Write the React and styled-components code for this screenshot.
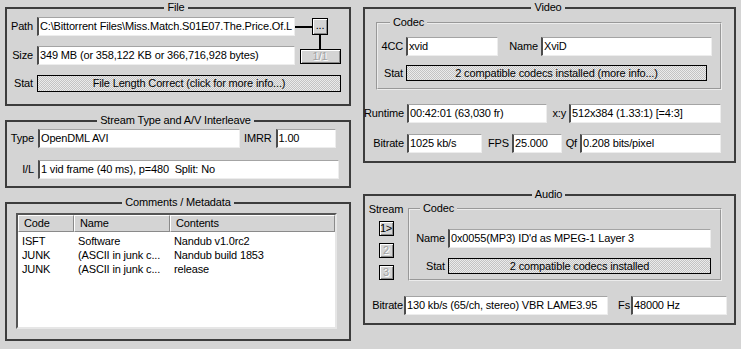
import React from "react";
import styled, { createGlobalStyle } from "styled-components";

const GlobalStyle = createGlobalStyle`
    html, body {
        margin: 0;
        padding: 0;
        background: #d4d4d4;
    }
    body {
        font-family: "Liberation Sans", Arial, sans-serif;
        font-size: 11px;
        letter-spacing: -0.15px;
        color: #000;
    }
    * {
        box-sizing: border-box;
    }
`;

const Window = styled.div`
    width: 741px;
    height: 349px;
    display: flex;
    gap: 12px;
    padding: 1px 5px 0 5px;
    background: #d4d4d4;
    overflow: hidden;
`;

const Column = styled.div`
    width: ${p => p.$w}px;
    flex-shrink: 0;
    display: flex;
    flex-direction: column;
    gap: ${p => p.$gap}px;
`;

const Group = styled.fieldset`
    margin: 0;
    padding: ${p => p.$pad};
    border: 2px solid #3c3c3c;
    min-inline-size: 0;
`;

const SubGroup = styled.fieldset`
    margin: 0 0 0 ${p => p.$ml || 0}px;
    width: ${p => p.$w}px;
    padding: ${p => p.$pad};
    border: 2px groove #ececec;
    min-inline-size: 0;
    flex-shrink: 0;
`;

const Legend = styled.legend`
    margin: ${p => (p.$left !== undefined ? `0 0 0 ${p.$left}px` : "0 auto")};
    padding: 0 3px;
    font-size: 11px;
    line-height: 13px;
`;

const Row = styled.div`
    display: flex;
    align-items: center;
    gap: ${p => p.$gap ?? 3}px;
    margin-top: ${p => p.$mt || 0}px;
`;

const Label = styled.span`
    display: inline-flex;
    justify-content: flex-end;
    width: ${p => (p.$w ? `${p.$w}px` : "auto")};
    margin-left: ${p => p.$ml || 0}px;
    flex-shrink: 0;
    white-space: nowrap;
    line-height: 13px;
`;

const Field = styled.div`
    width: ${p => p.$w}px;
    height: 19px;
    flex-shrink: 0;
    background: #fff;
    border-style: solid;
    border-width: 1px 1px 1px 2px;
    border-color: #a4a4a4 #ededed #ededed #4c4c4c;
    padding-left: 1px;
    line-height: 17px;
    white-space: nowrap;
    overflow: hidden;
`;

const StatButton = styled.div`
    width: ${p => p.$w}px;
    height: ${p => p.$h || 16}px;
    flex-shrink: 0;
    border: 1px solid #000;
    background-color: #ebebeb;
    background-image: conic-gradient(#c3c3c3 25%, transparent 0 50%, #c3c3c3 0 75%, transparent 0);
    background-size: 2px 2px;
    text-align: center;
    line-height: ${p => (p.$h || 16) - 2}px;
    white-space: nowrap;
    overflow: hidden;
    cursor: pointer;
`;

const SmallButton = styled.div`
    width: ${p => p.$w}px;
    height: ${p => p.$h}px;
    margin-top: ${p => p.$mt || 0}px;
    flex-shrink: 0;
    border: 1px solid #000;
    background: #d4d4d4;
    box-shadow: inset 1px 1px #fff, inset -1px -1px #8a8a8a;
    display: flex;
    align-items: center;
    justify-content: center;
    font-size: 11px;
    line-height: 11px;
    color: ${p => (p.$off ? "#a2a2a2" : "#000")};
    text-shadow: ${p => (p.$off ? "1px 1px #fff" : "none")};
`;

const BrowseButton = styled(SmallButton)`
    position: relative;
    align-items: flex-end;
    padding-bottom: 3px;

    &::before {
        content: "";
        position: absolute;
        right: 100%;
        top: 7px;
        width: 18px;
        height: 2px;
        background: #000;
    }
`;

const FileGrid = styled.div`
    display: grid;
    grid-template-columns: 23px 258px 42px;
    grid-template-rows: 19px 19px 17px;
    column-gap: 4px;
    row-gap: 10px;
    align-items: center;
`;

const Cluster = styled.div`
    grid-column: 3;
    grid-row: 1 / span 2;
    align-self: start;
    display: flex;
    flex-direction: column;
    align-items: center;
`;

const Link = styled.div`
    width: 2px;
    height: 14px;
    background: #000;
`;

const WideStat = styled(StatButton)`
    grid-column: 2 / span 2;
    width: auto;
`;

const ListBox = styled.div`
    width: 321px;
    height: 116px;
    background: #fff;
    border-style: solid;
    border-width: 2px;
    border-color: #555 #e6e6e6 #e6e6e6 #555;
`;

const ListRow = styled.div`
    display: grid;
    grid-template-columns: 56px 96px 1fr;
`;

const HeadCell = styled.div`
    height: 17px;
    padding-left: 5px;
    line-height: 15px;
    background: #d4d4d4;
    border-style: solid;
    border-width: 1px;
    border-color: #fff #8a8a8a #8a8a8a #fff;
`;

const ListBody = styled.div`
    padding-top: 2px;
`;

const Cell = styled.div`
    height: 14px;
    padding-left: 4px;
    line-height: 14px;
    white-space: nowrap;
    overflow: hidden;
`;

const TopRow = styled.div`
    display: flex;
    align-items: flex-start;
    gap: 3px;
`;

const StreamCol = styled.div`
    width: 38px;
    flex-shrink: 0;
    display: flex;
    flex-direction: column;
    align-items: center;
    gap: 7px;
    padding-top: 1px;
`;

const StreamTitle = styled.div`
    line-height: 13px;
    margin-bottom: -2px;
`;

const metadata = [
    ["ISFT", "Software", "Nandub v1.0rc2"],
    ["JUNK", "(ASCII in junk c...", "Nandub build 1853"],
    ["JUNK", "(ASCII in junk c...", "release"],
];

function App() {
    return (
        <>
            <GlobalStyle />
            <Window>
                <Column $w={346} $gap={8}>
                    <Group $pad="3px 7px 12px 3px">
                        <Legend>File</Legend>
                        <FileGrid>
                            <Label $w={23}>Path</Label>
                            <Field $w={258}>{"C:\\Bittorrent Files\\Miss.Match.S01E07.The.Price.Of.L"}</Field>
                            <Cluster>
                                <BrowseButton $w={16} $h={17} $mt={1}>...</BrowseButton>
                                <Link />
                                <SmallButton $w={41} $h={15} $off>1/1</SmallButton>
                            </Cluster>
                            <Label $w={23}>Size</Label>
                            <Field $w={258}>349 MB (or 358,122 KB or 366,716,928 bytes)</Field>
                            <Label $w={23}>Stat</Label>
                            <WideStat $h={17}>File Length Correct (click for more info...)</WideStat>
                        </FileGrid>
                    </Group>

                    <Group $pad="2px 8px 7px 3px">
                        <Legend>Stream Type and A/V Interleave</Legend>
                        <Row $gap={4}>
                            <Label $w={24}>Type</Label>
                            <Field $w={202}>OpenDML AVI</Field>
                            <Label>IMRR</Label>
                            <Field $w={60}>1.00</Field>
                        </Row>
                        <Row $gap={4} $mt={12}>
                            <Label $w={24}>I/L</Label>
                            <Field $w={301}>1 vid frame (40 ms), p=480&nbsp; Split: No</Field>
                        </Row>
                    </Group>

                    <Group $pad="4px 9px 10px 9px">
                        <Legend>Comments / Metadata</Legend>
                        <ListBox>
                            <ListRow>
                                <HeadCell>Code</HeadCell>
                                <HeadCell>Name</HeadCell>
                                <HeadCell>Contents</HeadCell>
                            </ListRow>
                            <ListBody>
                                {metadata.map((m, i) => (
                                    <ListRow key={i}>
                                        <Cell>{m[0]}</Cell>
                                        <Cell>{m[1]}</Cell>
                                        <Cell>{m[2]}</Cell>
                                    </ListRow>
                                ))}
                            </ListBody>
                        </ListBox>
                    </Group>
                </Column>

                <Column $w={373} $gap={25}>
                    <Group $pad="2px 4px 8px 1px">
                        <Legend>Video</Legend>
                        <SubGroup $ml={10} $w={346} $pad="8px 4px 7px 2px">
                            <Legend $left={10}>Codec</Legend>
                            <Row>
                                <Label $w={23}>4CC</Label>
                                <Field $w={92}>xvid</Field>
                                <Label $w={29} $ml={8}>Name</Label>
                                <Field $w={171}>XviD</Field>
                            </Row>
                            <Row $mt={9}>
                                <Label $w={23}>Stat</Label>
                                <StatButton $w={301}>2 compatible codecs installed (more info...)</StatButton>
                            </Row>
                        </SubGroup>
                        <Row $mt={14}>
                            <Label $w={38}>Runtime</Label>
                            <Field $w={140}>00:42:01 (63,030 fr)</Field>
                            <Label $w={16}>x:y</Label>
                            <Field $w={152}>512x384 (1.33:1) [=4:3]</Field>
                        </Row>
                        <Row $mt={11}>
                            <Label $w={38}>Bitrate</Label>
                            <Field $w={75}>1025 kb/s</Field>
                            <Label $w={24}>FPS</Label>
                            <Field $w={50}>25.000</Field>
                            <Label $w={12}>Qf</Label>
                            <Field $w={141}>0.208 bits/pixel</Field>
                        </Row>
                    </Group>

                    <Group $pad="1px 4px 8px 2px">
                        <Legend>Audio</Legend>
                        <TopRow>
                            <StreamCol>
                                <StreamTitle>Stream</StreamTitle>
                                <SmallButton $w={15} $h={15}>1&gt;</SmallButton>
                                <SmallButton $w={15} $h={15} $off>2</SmallButton>
                                <SmallButton $w={15} $h={15} $off>3</SmallButton>
                            </StreamCol>
                            <SubGroup $w={314} $pad="14px 4px 5px 6px">
                                <Legend $left={4}>Codec</Legend>
                                <Row>
                                    <Label $w={29}>Name</Label>
                                    <Field $w={263}>0x0055(MP3) ID'd as MPEG-1 Layer 3</Field>
                                </Row>
                                <Row $mt={10}>
                                    <Label $w={29}>Stat</Label>
                                    <StatButton $w={263}>2 compatible codecs installed</StatButton>
                                </Row>
                            </SubGroup>
                        </TopRow>
                        <Row $mt={15} $gap={1}>
                            <Label $w={36}>Bitrate</Label>
                            <Field $w={204}>130 kb/s (65/ch, stereo) VBR LAME3.95</Field>
                            <Label $w={11} $ml={10}>Fs</Label>
                            <Field $w={96}>48000 Hz</Field>
                        </Row>
                    </Group>
                </Column>
            </Window>
        </>
    );
}

export default App;
